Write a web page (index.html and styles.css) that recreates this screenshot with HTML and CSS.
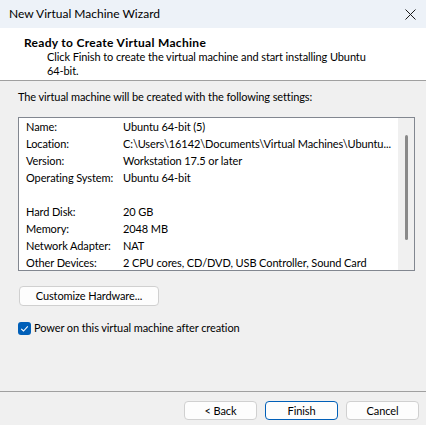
FILE: index.html
```html
<!DOCTYPE html>
<html>
<head>
<meta charset="utf-8">
<link rel="stylesheet" href="styles.css">
</head>
<body>
<div class="window">
  <div class="titlebar">
    <span class="title">New Virtual Machine Wizard</span>
    <svg class="close" width="11" height="11" viewBox="0 0 11 11"><path d="M0.5 0.5 L10.5 10.5 M10.5 0.5 L0.5 10.5" stroke="#1a1a1a" stroke-width="1" fill="none"/></svg>
  </div>
  <div class="header">
    <div class="h-title">Ready to Create Virtual Machine</div>
    <div class="h-sub">Click Finish to create the virtual machine and start installing Ubuntu<br>64-bit.</div>
  </div>
  <div class="content">
    <div class="intro">The virtual machine will be created with the following settings:</div>
    <div class="listbox">
      <div class="rows">
        <div class="row"><span class="k">Name:</span><span class="v">Ubuntu 64-bit (5)</span></div>
        <div class="row"><span class="k">Location:</span><span class="v">C:\Users\16142\Documents\Virtual Machines\Ubuntu...</span></div>
        <div class="row"><span class="k">Version:</span><span class="v">Workstation 17.5 or later</span></div>
        <div class="row"><span class="k">Operating System:</span><span class="v">Ubuntu 64-bit</span></div>
        <div class="row"></div>
        <div class="row"><span class="k">Hard Disk:</span><span class="v">20 GB</span></div>
        <div class="row"><span class="k">Memory:</span><span class="v">2048 MB</span></div>
        <div class="row"><span class="k">Network Adapter:</span><span class="v">NAT</span></div>
        <div class="row"><span class="k">Other Devices:</span><span class="v">2 CPU cores, CD/DVD, USB Controller, Sound Card</span></div>
      </div>
      <div class="scrollbar"><div class="thumb"></div></div>
    </div>
    <button class="btn customize">Customize Hardware...</button>
    <label class="check">
      <span class="box"><svg width="13" height="13" viewBox="0 0 13 13"><path d="M3.2 6.8 L5.5 9 L9.8 4.3" stroke="#fff" stroke-width="1.1" fill="none"/></svg></span>
      <span>Power on this virtual machine after creation</span>
    </label>
  </div>
  <div class="footer">
    <button class="btn fbtn">&lt; Back</button>
    <button class="btn fbtn default">Finish</button>
    <button class="btn fbtn">Cancel</button>
  </div>
</div>
</body>
</html>
```
FILE: styles.css
```css
* { box-sizing: border-box; }
html, body { margin: 0; padding: 0; }
body {
  width: 426px;
  height: 425px;
  overflow: hidden;
  font-family: Lato, "Liberation Sans", sans-serif;
  font-size: 11px;
  letter-spacing: -0.1px;
  color: #000;
  background: #f0f0f0;
}
.window {
  display: flex;
  flex-direction: column;
  height: 425px;
}
.titlebar {
  height: 28px;
  background: #edf2f8;
  display: flex;
  align-items: center;
  justify-content: space-between;
  padding: 0 10px 0 9px;
}
.title { font-size: 12px; line-height: 16px; letter-spacing: 0; }
.close { display: block; margin-top: 1px; }
.header {
  height: 53px;
  background: #fff;
  border-bottom: 1px solid #a0a0a0;
  padding: 8px 0 0 24px;
  white-space: nowrap;
}
.h-title { font-weight: bold; font-size: 12px; letter-spacing: 0.3px; line-height: 14px; }
.h-sub { padding-left: 23px; line-height: 14px; }
.content {
  flex: 1;
  padding: 8px 11px 0 18px;
  border-bottom: 1px solid #a0a0a0;
}
.intro { line-height: 15px; white-space: nowrap; }
.listbox {
  margin-top: 13px;
  height: 154px;
  border: 1px solid #828790;
  background: #fff;
  display: flex;
  overflow: hidden;
}
.rows {
  flex: 1;
  min-width: 0;
  padding: 0 0 0 7px;
  overflow: hidden;
}
.row {
  display: flex;
  height: 17px;
  line-height: 17px;
  white-space: nowrap;
}
.k { width: 97px; flex: none; }
.scrollbar {
  width: 16px;
  flex: none;
  background: #f0f0f0;
  display: flex;
  justify-content: center;
  padding-top: 17px;
}
.thumb {
  width: 3px;
  height: 105px;
  background: #8a8a8a;
  border-radius: 2px;
  margin-left: 1px;
}
.btn {
  font-family: inherit;
  font-size: 11px;
  letter-spacing: -0.1px;
  color: #000;
  background: #fdfdfd;
  border: 1px solid #d0d0d0;
  border-radius: 4px;
  padding: 0;
  line-height: 16px;
}
.customize {
  display: block;
  margin: 15px 0 0 1px;
  width: 140px;
  height: 20px;
}
.check {
  display: flex;
  align-items: center;
  margin-top: 15px;
  gap: 3px;
  line-height: 14px;
}
.box {
  width: 13px;
  height: 13px;
  background: #005fb8;
  border-radius: 3px;
  display: block;
}
.box svg { display: block; }
.footer {
  height: 33px;
  display: flex;
  justify-content: flex-end;
  align-items: flex-start;
  padding: 9px 7px 0 0;
  gap: 8px;
}
.fbtn {
  width: 73px;
  height: 19px;
}
.fbtn.default { border-color: #005fb8; }
```
